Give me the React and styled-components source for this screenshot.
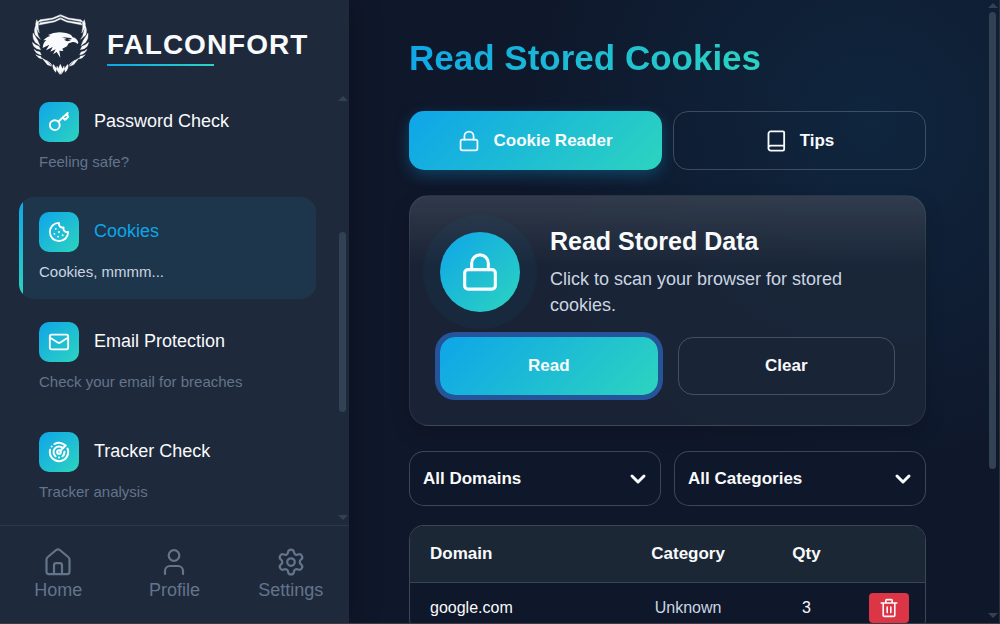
import React from "react";
import styled, { createGlobalStyle, css } from "styled-components";
import { Cookie, Mail, Radar, Settings } from "lucide-react";

const accent = "linear-gradient(135deg, #0ea5e9, #2dd4bf)";
const line = "rgba(255, 255, 255, 0.2)";

const GlobalStyle = createGlobalStyle`
  *, *::before, *::after { box-sizing: border-box; }
  body {
    margin: 0;
    background: #0f172a;
    color: #f8fafc;
    font-family: "Liberation Sans", Arial, sans-serif;
    font-size: 18px;
  }
  button, select { font: inherit; color: inherit; }
  h1, h2, p { margin: 0; }
`;

const Shell = styled.div`
  display: grid;
  grid-template-columns: 349px 1fr;
  height: 100vh;
  overflow: hidden;
  border-right: 1px solid #2b303b;
  border-bottom: 1px solid #3b3d45;
`;

const Sidebar = styled.aside`
  display: flex;
  flex-direction: column;
  min-height: 0;
  background: #1e293b;
  box-shadow: 0 0 30px rgba(0, 0, 0, 0.3);
  z-index: 1;
`;

const Brand = styled.header`
  display: flex;
  align-items: center;
  gap: 15px;
  padding: 13px 32px 12px;
  svg { flex: none; }
`;

const BrandName = styled.div`
  font-size: 28px;
  font-weight: 700;
  line-height: 32px;
  letter-spacing: 1px;
  padding-top: 6px;
  &::after {
    content: "";
    display: block;
    width: 107px;
    height: 2px;
    margin-top: 3px;
    background: linear-gradient(90deg, #0ea5e9, #2dd4bf);
  }
`;

const SideBody = styled.div`
  display: flex;
  flex: 1;
  min-height: 0;
`;

const ToolList = styled.nav`
  flex: 1;
  display: flex;
  flex-direction: column;
  gap: 8px;
  padding: 0 20px 0 19px;
  overflow: hidden;
`;

const ToolItem = styled.a`
  display: grid;
  grid-template-columns: 40px 1fr;
  flex: none;
  align-items: center;
  gap: 10px 15px;
  padding: 15px 20px 17px;
  border-radius: 15px;
  text-decoration: none;
  color: #f8fafc;
  ${(p) => p.$active && css`
    color: #0ea5e9;
    background:
      linear-gradient(180deg, #0ea5e9, #2dd4bf) left / 4px 100% no-repeat,
      #1d364c;
  `}
`;

const ToolIcon = styled.span`
  display: grid;
  place-items: center;
  width: 40px;
  height: 40px;
  border-radius: 10px;
  background: ${accent};
  color: #fff;
`;

const ToolName = styled.span`
  line-height: 20px;
  padding-bottom: 2px;
`;

const ToolNote = styled.span`
  grid-column: 1 / -1;
  font-size: 15px;
  line-height: 20px;
  color: ${(p) => (p.$active ? "#cbd5e1" : "#64748b")};
`;

const BottomNav = styled.nav`
  display: grid;
  grid-template-columns: repeat(3, 1fr);
  padding: 20px 0;
  border-top: 1px solid #2d3748;
`;

const NavLink = styled.a`
  display: flex;
  flex-direction: column;
  align-items: center;
  color: #64748b;
  text-decoration: none;
  line-height: 25px;
  svg { height: 32px; }
`;

const Track = styled.div`
  display: flex;
  flex-direction: column;
  align-items: center;
  justify-content: space-between;
  flex: none;
  width: 13px;
  padding: ${(p) => p.$pad};
`;

const Arrow = styled.i`
  border: 5px solid transparent;
  ${(p) => (p.$up ? "border-bottom-color" : "border-top-color")}: #334155;
  ${(p) => (p.$up ? "border-top" : "border-bottom")}-width: 0;
`;

const Rail = styled.div`
  display: flex;
  flex-direction: column;
  flex: 1;
  margin: 3px 0;
`;

const Thumb = styled.div`
  width: 7px;
  flex: ${(p) => p.$size} 0 0;
  border-radius: 4px;
  background: #334155;
`;

const Space = styled.div`
  flex: ${(p) => p.$size} 0 0;
`;

const Main = styled.main`
  display: flex;
  min-width: 0;
  min-height: 0;
  background:
    radial-gradient(circle at 80% 20%, rgba(14, 165, 233, 0.1), transparent 50%),
    #0f172a;
`;

const Content = styled.div`
  flex: 1;
  min-width: 0;
  padding: 38px 60px 0;
  overflow: hidden;
`;

const Title = styled.h1`
  width: fit-content;
  margin-bottom: 33px;
  font-size: 35px;
  line-height: 40px;
  background: ${accent};
  background-clip: text;
  color: transparent;
`;

const Pair = styled.div`
  display: grid;
  grid-template-columns: 1fr 1fr;
  gap: ${(p) => p.$gap};
`;

const Button = styled.button`
  display: flex;
  align-items: center;
  justify-content: center;
  gap: 13px;
  height: ${(p) => (p.$tab ? "59px" : "58px")};
  padding: 0 20px;
  border: 1px solid ${line};
  border-radius: 15px;
  background: transparent;
  font-size: 17px;
  font-weight: 700;
  ${(p) => p.$primary && css`
    border: 0;
    background: ${accent};
  `}
  ${(p) => p.$tab && p.$primary && css`
    box-shadow: 0 5px 15px rgba(14, 165, 233, 0.3);
  `}
  ${(p) => p.$ring && css`
    box-shadow: 0 0 0 5px #26549a;
  `}
`;

const Card = styled.section`
  margin: 25px 0;
  padding: 30px;
  border: 1px solid rgba(255, 255, 255, 0.07);
  border-radius: 20px;
  background:
    linear-gradient(180deg, rgba(255, 255, 255, 0.1), transparent 70px),
    rgba(30, 41, 59, 0.7);
  box-shadow: 0 8px 20px rgba(0, 0, 0, 0.15);
`;

const CardHead = styled.div`
  display: flex;
  align-items: center;
  gap: 30px;
  margin-bottom: 19px;
`;

const Badge = styled.div`
  display: grid;
  place-items: center;
  flex: none;
  width: 80px;
  height: 80px;
  border-radius: 50%;
  background: ${accent};
  box-shadow: 0 0 0 17px rgba(14, 165, 233, 0.05);
`;

const CardTitle = styled.h2`
  margin-bottom: 10px;
  font-size: 25px;
  line-height: 30px;
`;

const CardText = styled.p`
  color: #cbd5e1;
  line-height: 26px;
`;

const SelectBox = styled.label`
  display: grid;
  align-items: center;
  > * { grid-area: 1 / 1; }
  svg {
    justify-self: end;
    margin-right: 14px;
    pointer-events: none;
  }
`;

const Select = styled.select`
  appearance: none;
  width: 100%;
  height: 55px;
  padding: 0 40px 0 13px;
  border: 1px solid ${line};
  border-radius: 15px;
  background: #0f172a;
  font-size: 17px;
  font-weight: 700;
`;

const TableFrame = styled.div`
  margin-top: 19px;
  border: 1px solid ${line};
  border-radius: 15px;
  overflow: hidden;
  background: #0f172a;
`;

const Table = styled.table`
  width: 100%;
  border-collapse: separate;
  border-spacing: 0;
  table-layout: fixed;
  font-size: 16px;
`;

const Th = styled.th`
  width: ${(p) => p.$width};
  height: 57px;
  padding: 0 ${(p) => (p.$left ? "20px" : "0")};
  background: #1c2736;
  border-bottom: 1px solid #3a4352;
  font-size: 17px;
  text-align: ${(p) => (p.$left ? "left" : "center")};
`;

const Td = styled.td`
  height: 50px;
  padding: 0 ${(p) => (p.$left ? "20px" : "0")};
  text-align: ${(p) => (p.$left ? "left" : "center")};
  color: ${(p) => (p.$soft ? "#cbd5e1" : "#f8fafc")};
`;

const Delete = styled.button`
  display: grid;
  place-items: center;
  width: 40px;
  height: 30px;
  margin: 0 auto;
  padding: 0;
  border: 0;
  border-radius: 4px;
  background: #dc3545;
`;

const Svg = ({ size, h = size, box = "0 0 24 24", w = 2, children }) => (
  <svg width={size} height={h} viewBox={box} fill="none" stroke="currentColor"
    strokeWidth={w} strokeLinecap="round" strokeLinejoin="round" aria-hidden="true">
    {children}
  </svg>
);

const Lock = ({ size }) => (
  <Svg size={size} w={1.9}>
    <rect x="2.8" y="10.6" width="18.4" height="11.7" rx="2" />
    <path d="M7 10.6V6.7a5 5 0 0 1 10 0v3.9" />
  </Svg>
);

const Book = () => (
  <Svg size={22} w={2}>
    <path d="M3.8 19.9V4a2.5 2.5 0 0 1 2.5-2.5h13.2a1.4 1.4 0 0 1 1.4 1.4v18.2a1.4 1.4 0 0 1-1.4 1.4H6.4a2.6 2.6 0 0 1 0-5.5h14.5" />
  </Svg>
);

const Key = () => (
  <Svg size={20} box="0 0 20 20" w={1.9}>
    <circle cx="5.8" cy="13.2" r="4.9" />
    <path d="M9.3 9.7 18.7.9M18 1.6l1 3.4-2.9 2.7-2.6-2.1" />
  </Svg>
);

const Home = () => (
  <Svg size={28} box="0 0 28 28" w={2.2}>
    <path d="M2.5 23.7V11.6q0-1.6 1.3-2.6l8.4-7q1.8-1.4 3.6 0l8.4 7q1.3 1 1.3 2.6v12.1q0 2.5-2.5 2.5H5q-2.5 0-2.5-2.5Z" />
    <path d="M10 26v-8.6q0-2.2 2.2-2.2h3.6q2.2 0 2.2 2.2V26" />
  </Svg>
);

const Profile = () => (
  <Svg size={28} box="0 0 28 28" w={2.2}>
    <circle cx="14" cy="7.5" r="5.3" />
    <path d="M5 26v-3a5 5 0 0 1 5-5h8a5 5 0 0 1 5 5v3" />
  </Svg>
);

const Trash = () => (
  <Svg size={18} h={20} box="0 0 18 20" w={1.6}>
    <path d="M1.2 5h15.6M5.8 5V2.6q0-1 1-1h4.4q1 0 1 1V5M3.2 5v12.4q0 1 1 1h9.6q1 0 1-1V5M7.2 9v5.6M10.8 9v5.6" />
  </Svg>
);

const Chevron = () => (
  <Svg size={18} h={12} box="0 0 18 12" w={3}>
    <path d="m3 3 6 6 6-6" />
  </Svg>
);

const Wing = () => (
  <g stroke="#f8fafc" strokeWidth="1" strokeLinejoin="round">
    <path d="M121 29 97 39 60 44 52 53 65 49 99 43 121 34Z" />
    <path d="M121 38 102 47 60 53 57 60 103 51 121 43Z" />
    <path d="M50 44Q45 55 48 68L58 84Q53 66 56 55Z" />
    <path d="M47 62Q40 76 46 90L61 103Q53 92 52 81Z" />
    <path d="M39 84Q37 102 46 112L60 122 53 106Z" />
    <path d="M37 112Q39 126 50 131L62 134 57 124Q46 121 37 112Z" />
    <path d="M42 133Q47 147 64 150L60 141Q50 141 42 133Z" />
    <path d="M47 149Q54 159 66 162L62 154Q54 153 47 149Z" />
    <path d="M66 159 81 168 94 184 82 179Z" />
    <path d="M79 166 91 174 98 184Z" />
    <path d="M100 178Q95 189 107 202L110 191Z" />
    <path d="M111 183Q107 192 113 199L119 208 118 195Z" />
  </g>
);

const Falcon = () => (
  <svg width="60" height="62" viewBox="36 24 180 186" fill="#f8fafc" role="img" aria-label="Falcon shield">
    <Wing />
    <g transform="matrix(-1 0 0 1 243 0)"><Wing /></g>
    <path d="m121 176 7 16-7 17-7-17Z" />
    <path d="M68 129Q69 113 79 105L70 106Q79 96 91 92L84 90Q108 77 138 84 154 87 158 97 171 99 175 113L173 117Q167 110 158 111L146 115 141 124 127 131 130 138 118 137 121 158 110 141 99 148 107 133 91 140 98 126 78 136 88 119Z" />
    <path d="M126 96 150 99 157 102 144 104 153 107 141 109 132 104 140 102Z" fill="#1e293b" />
  </svg>
);

const Scrollbar = ({ pad, before, size, after }) => (
  <Track $pad={pad} aria-hidden="true">
    <Arrow $up />
    <Rail>
      <Space $size={before} />
      <Thumb $size={size} />
      <Space $size={after} />
    </Rail>
    <Arrow />
  </Track>
);

const tools = [
  { name: "Password Check", note: "Feeling safe?", icon: <Key /> },
  { name: "Cookies", note: "Cookies, mmmm...", icon: <Cookie size={22} />, active: true },
  { name: "Email Protection", note: "Check your email for breaches", icon: <Mail size={22} /> },
  { name: "Tracker Check", note: "Tracker analysis", icon: <Radar size={22} strokeWidth={2.2} /> },
];

export default function App() {
  return (
    <>
      <GlobalStyle />
      <Shell>
        <Sidebar>
          <Brand>
            <Falcon />
            <BrandName>FALCONFORT</BrandName>
          </Brand>
          <SideBody>
            <ToolList aria-label="Tools">
              {tools.map((t) => (
                <ToolItem key={t.name} href="#" $active={t.active}>
                  <ToolIcon>{t.icon}</ToolIcon>
                  <ToolName>{t.name}</ToolName>
                  <ToolNote $active={t.active}>{t.note}</ToolNote>
                </ToolItem>
              ))}
            </ToolList>
            <Scrollbar pad="9px 0 5px" before={128} size={181} after={100} />
          </SideBody>
          <BottomNav aria-label="Primary">
            <NavLink href="#"><Home />Home</NavLink>
            <NavLink href="#"><Profile />Profile</NavLink>
            <NavLink href="#"><Settings size={30} strokeWidth={1.8} />Settings</NavLink>
          </BottomNav>
        </Sidebar>
        <Main>
          <Content>
            <Title>Read Stored Cookies</Title>
            <Pair $gap="11px">
              <Button $tab $primary><Lock size={22} />Cookie Reader</Button>
              <Button $tab><Book />Tips</Button>
            </Pair>
            <Card>
              <CardHead>
                <Badge><Lock size={40} /></Badge>
                <div>
                  <CardTitle>Read Stored Data</CardTitle>
                  <CardText>Click to scan your browser for stored cookies.</CardText>
                </div>
              </CardHead>
              <Pair $gap="20px">
                <Button $primary $ring>Read</Button>
                <Button>Clear</Button>
              </Pair>
            </Card>
            <Pair $gap="13px">
              <SelectBox>
                <Select aria-label="Domain"><option>All Domains</option></Select>
                <Chevron />
              </SelectBox>
              <SelectBox>
                <Select aria-label="Category"><option>All Categories</option></Select>
                <Chevron />
              </SelectBox>
            </Pair>
            <TableFrame>
              <Table>
                <thead>
                  <tr>
                    <Th $left $width="40%">Domain</Th>
                    <Th $width="28%">Category</Th>
                    <Th $width="18%">Qty</Th>
                    <Th $width="14%" aria-label="Actions" />
                  </tr>
                </thead>
                <tbody>
                  <tr>
                    <Td $left>google.com</Td>
                    <Td $soft>Unknown</Td>
                    <Td>3</Td>
                    <Td><Delete aria-label="Delete google.com"><Trash /></Delete></Td>
                  </tr>
                </tbody>
              </Table>
            </TableFrame>
          </Content>
          <Scrollbar pad="3px 0 5px" before={1} size={457} after={141} />
        </Main>
      </Shell>
    </>
  );
}
